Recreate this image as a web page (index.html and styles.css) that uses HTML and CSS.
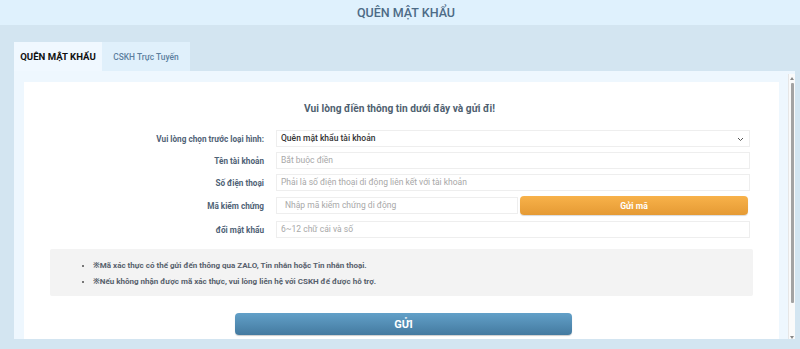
FILE: index.html
```html
<!DOCTYPE html>
<html lang="vi">
<head>
<meta charset="utf-8">
<link rel="stylesheet" href="styles.css">
</head>
<body>
<header class="top">QUÊN MẬT KHẨU</header>
<main class="wrap">
  <nav class="tabs">
    <div class="tab active">QUÊN MẬT KHẨU</div>
    <div class="tab">CSKH Trực Tuyến</div>
  </nav>
  <section class="panel">
    <div class="card">
      <h2 class="lead">Vui lòng điền thông tin dưới đây và gửi đi!</h2>
      <div class="row">
        <label class="lbl">Vui lòng chọn trước loại hình:</label>
        <div class="field select">Quên mật khẩu tài khoản
          <svg class="chev" width="7" height="5" viewBox="0 0 7 5"><path d="M1 1l2.5 2.5L6 1" fill="none" stroke="#555" stroke-width="1"/></svg>
        </div>
      </div>
      <div class="row">
        <label class="lbl">Tên tài khoản</label>
        <div class="field ph">Bắt buộc điền</div>
      </div>
      <div class="row">
        <label class="lbl">Số điện thoại</label>
        <div class="field ph">Phải là số điện thoại di động liên kết với tài khoản</div>
      </div>
      <div class="row code">
        <label class="lbl">Mã kiểm chứng</label>
        <div class="field ph short">Nhập mã kiểm chứng di động</div>
        <div class="btn-code">Gửi mã</div>
      </div>
      <div class="row">
        <label class="lbl">đổi mật khẩu</label>
        <div class="field ph">6~12 chữ cái và số</div>
      </div>
      <div class="notes">
        <ul>
          <li>※Mã xác thực có thể gửi đến thông qua ZALO, Tin nhắn hoặc Tin nhắn thoại.</li>
          <li>※Nếu không nhận được mã xác thực, vui lòng liên hệ với CSKH để được hỗ trợ.</li>
        </ul>
      </div>
      <div class="submit-wrap"><div class="submit">GỬI</div></div>
    </div>
    <div class="scroll">
      <span class="arr up"></span>
      <span class="thumb"></span>
      <span class="arr down"></span>
    </div>
  </section>
</main>
</body>
</html>
```
FILE: styles.css
```css
* { box-sizing: border-box; }
html, body { margin: 0; height: 349px; overflow: hidden; }
body {
  background: #d3e5f1;
  font-family: Roboto, "Noto Sans", sans-serif;
}
.top {
  height: 25px;
  background: #dff1fd;
  color: #4d6b86;
  font-size: 12.5px;
  font-weight: 500;
  text-align: center;
  line-height: 26px;
  padding-left: 12px;
}
.wrap {
  padding: 17px 5px 0 14px;
}
.tabs {
  display: flex;
  height: 29px;
}
.tab {
  width: 88px;
  display: flex;
  align-items: center;
  justify-content: center;
  font-size: 8.4px;
  font-weight: 500;
  color: #5c7f9e;
  background: #e0f0fb;
}
.tab.active {
  background: #f0f8ff;
  color: #111;
  font-weight: 700;
  font-size: 9.6px;
  width: 88px;
}
.panel {
  display: flex;
  height: 268px;
  background: #eef7fe;
  padding: 11px 0 0 10px;
  overflow: hidden;
}
.card {
  width: 755px;
  background: #fff;
  padding-top: 21px;
  height: 300px;
}
.lead {
  margin: 0 0 15px;
  text-align: center;
  font-size: 10.2px;
  font-weight: 700;
  color: #4f5f70;
  padding-right: 4px;
  line-height: 12px;
}
.row {
  display: flex;
  align-items: center;
  margin-bottom: 5px;
  height: 17px;
}
.row.code { height: 19px; margin-bottom: 6px; margin-top: 1px; }
.lbl {
  width: 252px;
  padding-right: 12px;
  text-align: right;
  font-size: 8.2px;
  font-weight: 700;
  color: #4f6276;
}
.field {
  width: 474px;
  height: 17px;
  border: 1px solid #eeeeee;
  font-size: 8.5px;
  padding-left: 4px;
  line-height: 15px;
  color: #333;
  position: relative;
}
.select { font-weight: 500; font-size: 8.5px; }
.chev { position: absolute; right: 5px; top: 6px; }
.ph { color: #a8a8a8; }
.short { width: 242px; padding-left: 8px; }
.btn-code {
  width: 228px;
  margin-left: 2px;
  height: 19px;
  border-radius: 4px;
  background: linear-gradient(#f8b24a, #e59a34);
  color: #fff;
  font-size: 8.6px;
  font-weight: 700;
  display: flex;
  align-items: center;
  justify-content: center;
  box-shadow: 0 1px 1px rgba(0,0,0,.15);
}
.notes {
  margin: 11px 26px 0 26px;
  background: #f3f3f3;
  border-radius: 2px;
  height: 47px;
  padding-top: 9px;
}
.notes ul {
  margin: 0;
  padding-left: 43px;
  list-style: square;
}
.notes li {
  font-size: 8px;
  font-weight: 700;
  color: #56606b;
  line-height: 16px;
}
.notes li::marker { color: #777; font-size: 8px; }
.submit-wrap {
  display: flex;
  padding-left: 211px;
  margin-top: 17px;
}
.submit {
  width: 337px;
  height: 22px;
  border-radius: 4px;
  background: linear-gradient(#62a0c8, #447aa0);
  color: #fff;
  font-size: 11px;
  font-weight: 700;
  display: flex;
  align-items: center;
  justify-content: center;
  box-shadow: 0 1px 1px rgba(0,0,0,.2);
}
.scroll {
  width: 7px;
  margin-left: 9px;
  margin-top: -8px;
  height: 268px;
  background: #fafafa;
  border-left: 1px solid #e6e6e6;
  display: flex;
  flex-direction: column;
  align-items: center;
  padding: 3px 0;
}
.thumb {
  width: 3px;
  height: 220px;
  margin: 3px 0 auto;
  background: #a3a3a3;
  border-radius: 1px;
}
.arr {
  width: 0; height: 0;
  border-left: 2px solid transparent;
  border-right: 2px solid transparent;
}
.arr.up { border-bottom: 3px solid #888; }
.arr.down { border-top: 3px solid #888; }
```
